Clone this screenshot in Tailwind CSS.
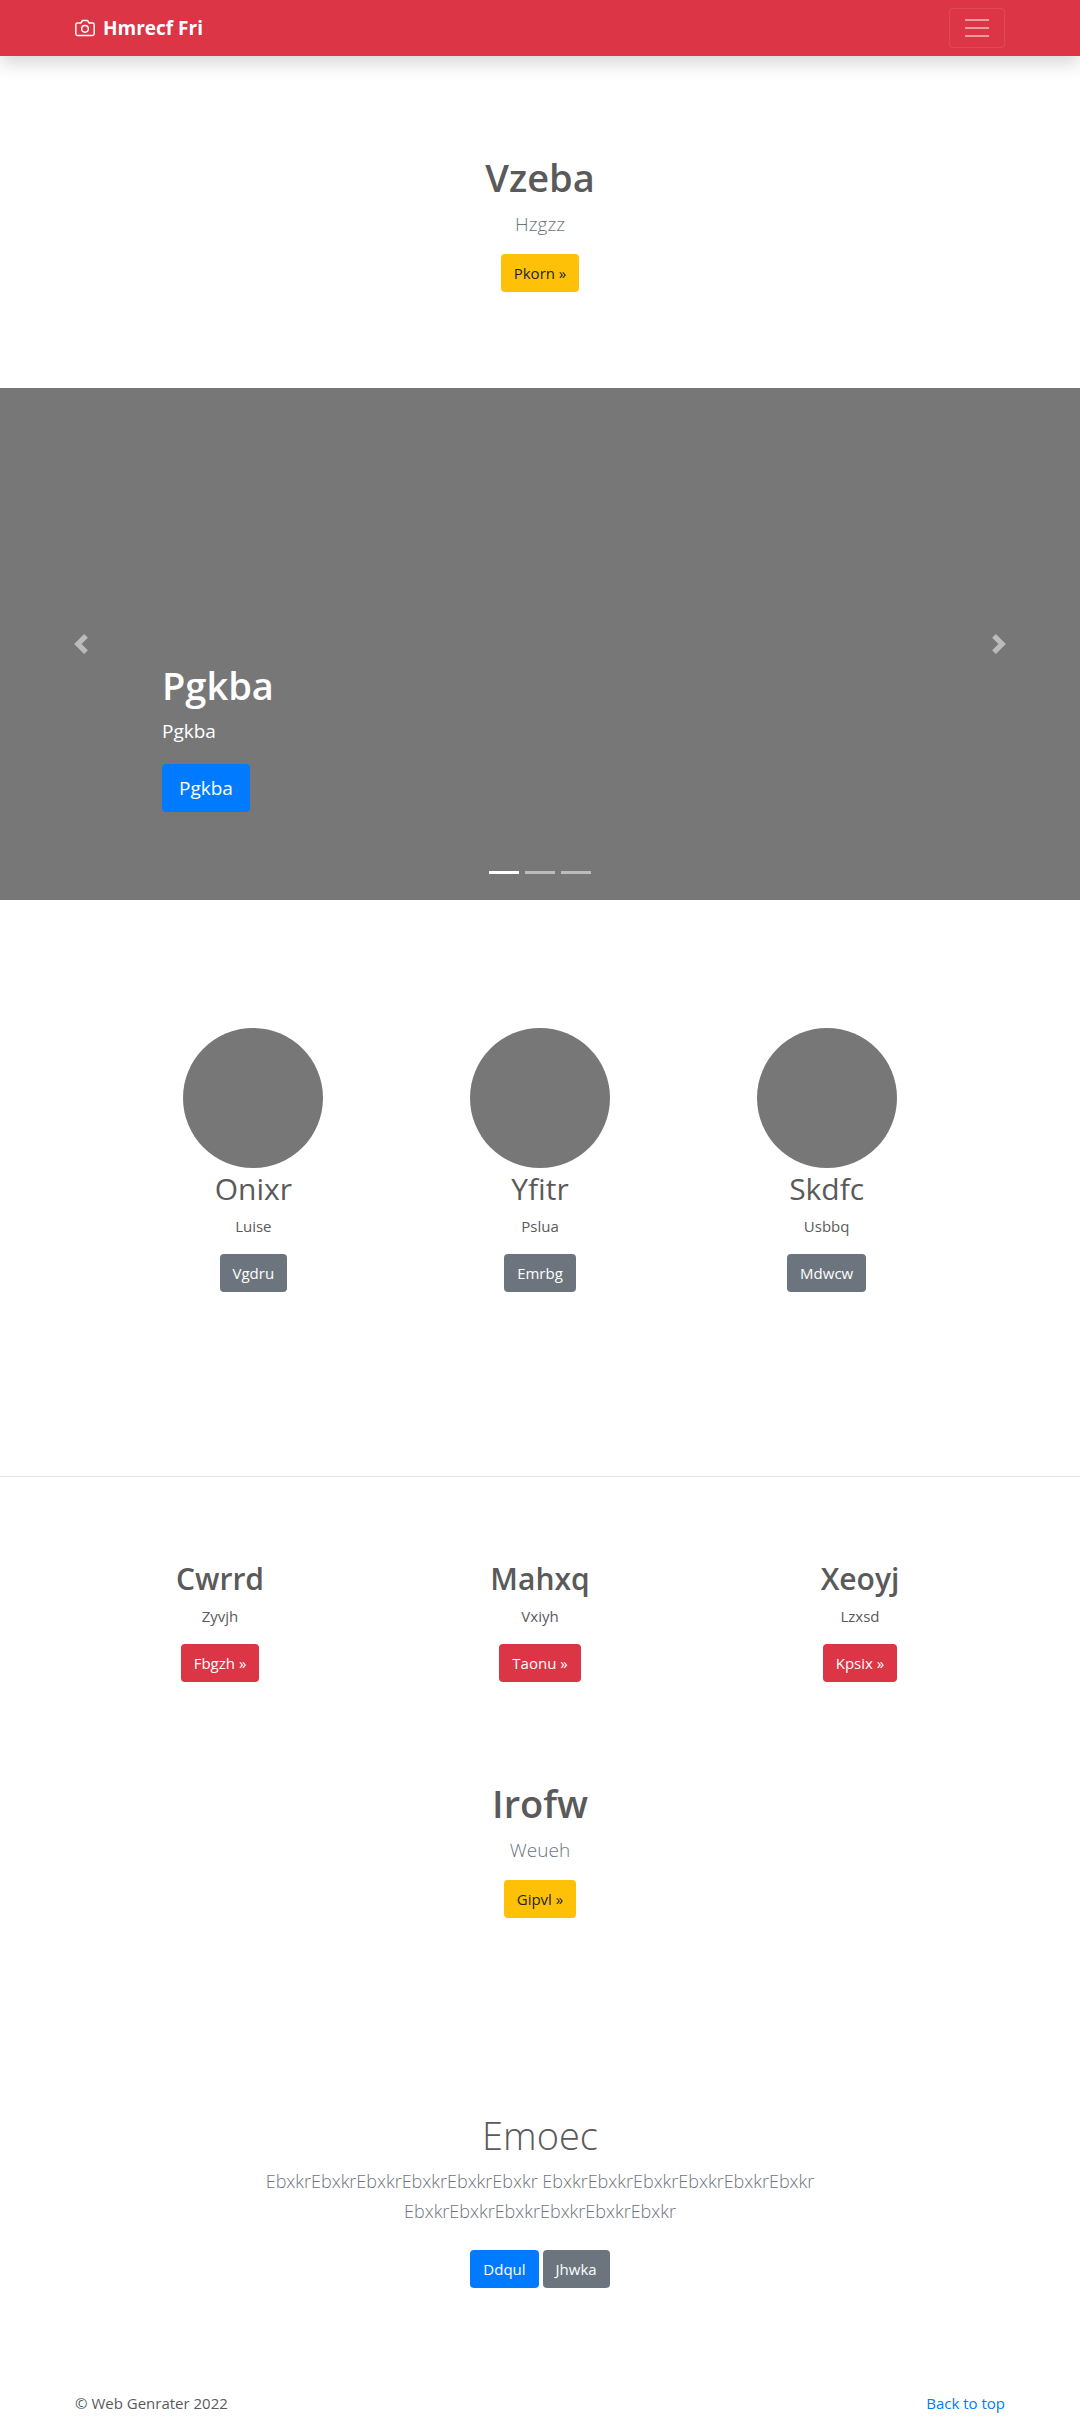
<!DOCTYPE html>
<html lang="en">
<head>
<meta charset="utf-8">
<meta name="viewport" content="width=device-width, initial-scale=1">
<title>Hmrecf Fri</title>
<script src="https://cdn.jsdelivr.net/npm/@tailwindcss/browser@4"></script>
</head>
<body class="bg-white font-['Open_Sans','Noto_Sans',sans-serif] text-[15px] leading-6 text-[#5a5a5a]">
<header class="relative bg-[#dc3545] shadow-[0_8px_16px_rgba(0,0,0,0.15)]">
  <nav class="mx-auto flex h-14 max-w-[930px] items-center justify-between">
    <a href="#" class="flex items-center gap-2 text-[19px] font-bold text-white">
      <svg class="size-5" viewBox="0 0 24 24" fill="none" stroke="currentColor" stroke-width="1.7" stroke-linecap="round" stroke-linejoin="round" aria-hidden="true"><path d="M23 19a2 2 0 0 1-2 2H3a2 2 0 0 1-2-2V8a2 2 0 0 1 2-2h4l2-3h6l2 3h4a2 2 0 0 1 2 2z"/><circle cx="12" cy="13" r="4"/></svg>
      <span>Hmrecf Fri</span>
    </a>
    <button type="button" aria-label="Toggle navigation" class="flex h-10 w-14 items-center justify-center rounded border border-white/10">
      <svg class="size-[30px]" viewBox="0 0 30 30" stroke="white" stroke-opacity=".5" stroke-width="2" aria-hidden="true"><path d="M3 7h24M3 15h24M3 23h24"/></svg>
    </button>
  </nav>
</header>

<main>
  <section class="py-24 text-center">
    <h1 class="mb-1.5 text-[38px] leading-[50px] font-semibold">Vzeba</h1>
    <p class="mb-3.5 text-[19px] leading-8 font-light text-[#6c757d]">Hzgzz</p>
    <a href="#" class="inline-block rounded bg-[#ffc107] px-[13px] py-[7px] align-top text-[#212529]">Pkorn »</a>
  </section>

  <section class="relative flex h-[512px] items-end bg-[#777] px-[15%] text-white" aria-label="Carousel">
    <div class="pb-[88px]">
      <h1 class="mb-1.5 text-[38px] leading-[50px] font-semibold">Pgkba</h1>
      <p class="mb-[18px] text-[19px] leading-[30px]">Pgkba</p>
      <a href="#" class="inline-block rounded bg-[#007bff] px-[17px] py-[9px] align-top text-[19px] leading-[30px]">Pgkba</a>
    </div>
    <button type="button" aria-label="Previous" class="absolute inset-y-0 left-0 flex w-[15%] items-center justify-center opacity-50">
      <svg class="size-5" viewBox="0 0 8 8" fill="white" aria-hidden="true"><path d="M5.25 0l-4 4 4 4 1.5-1.5L4.25 4l2.5-2.5L5.25 0z"/></svg>
    </button>
    <button type="button" aria-label="Next" class="absolute inset-y-0 right-0 flex w-[15%] items-center justify-center opacity-50">
      <svg class="size-5" viewBox="0 0 8 8" fill="white" aria-hidden="true"><path d="M2.75 0l-1.5 1.5L3.75 4l-2.5 2.5L2.75 8l4-4-4-4z"/></svg>
    </button>
    <div class="absolute inset-x-0 bottom-[26px] flex justify-center gap-1.5">
      <button type="button" aria-label="Slide 1" class="h-[3px] w-[30px] bg-white"></button>
      <button type="button" aria-label="Slide 2" class="h-[3px] w-[30px] bg-white/50"></button>
      <button type="button" aria-label="Slide 3" class="h-[3px] w-[30px] bg-white/50"></button>
    </div>
  </section>

  <section class="mx-auto grid max-w-[860px] grid-cols-3 pt-32 pb-[184px] text-center">
    <div>
      <div class="mx-auto size-[140px] rounded-full bg-[#777]"></div>
      <h2 class="mb-1 text-3xl leading-[42px]">Onixr</h2>
      <p class="mb-4">Luise</p>
      <a href="#" class="inline-block rounded bg-[#6c757d] px-[13px] py-[7px] align-top text-white">Vgdru</a>
    </div>
    <div>
      <div class="mx-auto size-[140px] rounded-full bg-[#777]"></div>
      <h2 class="mb-1 text-3xl leading-[42px]">Yfitr</h2>
      <p class="mb-4">Pslua</p>
      <a href="#" class="inline-block rounded bg-[#6c757d] px-[13px] py-[7px] align-top text-white">Emrbg</a>
    </div>
    <div>
      <div class="mx-auto size-[140px] rounded-full bg-[#777]"></div>
      <h2 class="mb-1 text-3xl leading-[42px]">Skdfc</h2>
      <p class="mb-4">Usbbq</p>
      <a href="#" class="inline-block rounded bg-[#6c757d] px-[13px] py-[7px] align-top text-white">Mdwcw</a>
    </div>
  </section>

  <hr class="border-black/10">

  <section class="mx-auto grid max-w-[960px] grid-cols-3 pt-[81px] text-center">
    <div>
      <h2 class="mb-1 text-3xl leading-[42px] font-semibold">Cwrrd</h2>
      <p class="mb-4">Zyvjh</p>
      <a href="#" class="inline-block rounded bg-[#dc3545] px-[13px] py-[7px] align-top text-white">Fbgzh »</a>
    </div>
    <div>
      <h2 class="mb-1 text-3xl leading-[42px] font-semibold">Mahxq</h2>
      <p class="mb-4">Vxiyh</p>
      <a href="#" class="inline-block rounded bg-[#dc3545] px-[13px] py-[7px] align-top text-white">Taonu »</a>
    </div>
    <div>
      <h2 class="mb-1 text-3xl leading-[42px] font-semibold">Xeoyj</h2>
      <p class="mb-4">Lzxsd</p>
      <a href="#" class="inline-block rounded bg-[#dc3545] px-[13px] py-[7px] align-top text-white">Kpsix »</a>
    </div>
  </section>

  <section class="py-24 text-center">
    <h1 class="mb-1.5 text-[38px] leading-[50px] font-semibold">Irofw</h1>
    <p class="mb-3.5 text-[19px] leading-8 font-light text-[#6c757d]">Weueh</p>
    <a href="#" class="inline-block rounded bg-[#ffc107] px-[13px] py-[7px] align-top text-[#212529]">Gipvl »</a>
  </section>

  <section class="mx-auto max-w-[610px] pt-24 pb-[103px] text-center">
    <h1 class="mb-1.5 text-[38px] leading-[50px] font-light">Emoec</h1>
    <p class="mb-6 text-lg leading-[30px] font-light text-[#6c757d]">EbxkrEbxkrEbxkrEbxkrEbxkrEbxkr EbxkrEbxkrEbxkrEbxkrEbxkrEbxkr EbxkrEbxkrEbxkrEbxkrEbxkrEbxkr</p>
    <div class="flex justify-center gap-1 text-white">
      <a href="#" class="rounded bg-[#007bff] px-[13px] py-[7px]">Ddqul</a>
      <a href="#" class="rounded bg-[#6c757d] px-[13px] py-[7px]">Jhwka</a>
    </div>
  </section>
</main>

<footer class="mx-auto flex max-w-[930px] justify-between">
  <p>© Web Genrater 2022</p>
  <a href="#" class="text-[#007bff]">Back to top</a>
</footer>
</body>
</html>
